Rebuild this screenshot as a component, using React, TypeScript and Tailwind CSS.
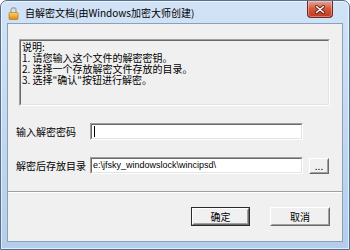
import React from 'react';

const cjk = "font-['Noto_Sans_CJK_SC','Microsoft_YaHei',sans-serif]";

// classic 3D sunken edge (edit boxes)
const Sunken: React.FC<{ className?: string; innerClass?: string; children?: React.ReactNode }> = ({ className = '', innerClass = '', children }) => (
  <div className={`border border-t-[#a0a0a0] border-l-[#a0a0a0] border-b-white border-r-white ${className}`}>
    <div className={`h-full border border-t-[#696969] border-l-[#696969] border-b-[#e3e3e3] border-r-[#e3e3e3] ${innerClass}`}>
      {children}
    </div>
  </div>
);

// classic raised push button
const PushButton: React.FC<{ label: string; isDefault?: boolean; className?: string }> = ({ label, isDefault, className = '' }) => {
  const face = (
    <div className="h-full border border-t-white border-l-white border-b-[#696969] border-r-[#696969]">
      <div className="h-full flex items-center justify-center border border-t-[#f0f0f0] border-l-[#f0f0f0] border-b-[#a0a0a0] border-r-[#a0a0a0] bg-[#f0f0f0] text-[10px] leading-none text-black">
        {label}
      </div>
    </div>
  );
  return isDefault ? (
    <div className={`border border-[#2b2b2b] ${className}`}>{face}</div>
  ) : (
    <div className={className}>{face}</div>
  );
};

const LockIcon = () => (
  <svg width="11" height="14" viewBox="0 0 11 14">
    <defs>
      <linearGradient id="lockBody" x1="0" y1="0" x2="0" y2="1">
        <stop offset="0" stopColor="#fbd667" />
        <stop offset="1" stopColor="#e0870f" />
      </linearGradient>
    </defs>
    <path d="M3 7V4.2a2.5 2.5 0 0 1 5 0V7" fill="none" stroke="#a8a8a8" strokeWidth="1.4" />
    <rect x="1" y="6.5" width="9" height="7" rx="1" fill="url(#lockBody)" stroke="#b36a0a" strokeWidth="0.6" />
  </svg>
);

const CloseButton = () => (
  <div className="w-[26px] h-[17px] rounded-b-[4px] border border-t-0 border-[#6e2a1d] bg-gradient-to-b from-[#e8a595] via-[#d2553c] to-[#c0391f] flex items-center justify-center shadow-[inset_0_0_0_1px_rgba(255,255,255,0.35)]">
    <svg width="10" height="9" viewBox="0 0 10 9">
      <path d="M1.5 1.5L8.5 7.5M8.5 1.5L1.5 7.5" stroke="#5a1a10" strokeWidth="3" strokeLinecap="round" />
      <path d="M1.5 1.5L8.5 7.5M8.5 1.5L1.5 7.5" stroke="#ffffff" strokeWidth="1.6" strokeLinecap="round" />
    </svg>
  </div>
);

export default function App() {
  return (
    <div className={`w-[350px] h-[250px] ${cjk} bg-white`}>
      <div className="w-full h-full flex flex-col rounded-t-[7px] border border-[#55708f] bg-gradient-to-b from-[#d2e3f6] via-[#c3d9f1] to-[#b4cdea] shadow-[inset_0_0_0_1px_rgba(255,255,255,0.6)]">
        {/* title bar */}
        <div className="h-[22px] flex items-start pl-[7px] pr-[16px]">
          <div className="mt-[5px]">
            <LockIcon />
          </div>
          <div className="ml-[6px] mt-[5px] text-[10px] leading-[14px] text-black">自解密文档(由Windows加密大师创建)</div>
          <div className="ml-auto">
            <CloseButton />
          </div>
        </div>

        {/* client area */}
        <div className="flex-1 mx-[6px] mb-[7px] border border-[#8aa1ba] bg-[#f0f0f0] flex flex-col text-black">
          <div className="flex flex-col pl-[11px] pr-[12px]">
            <Sunken className="mt-[15px] h-[67px]" innerClass="bg-[#f0f0f0] pl-[1px] text-[10px] leading-[11px]">
              <div>说明:</div>
              <div>1. 请您输入这个文件的解密密钥。</div>
              <div>2. 选择一个存放解密文件存放的目录。</div>
              <div>3. 选择"确认"按钮进行解密。</div>
            </Sunken>

            <div className="mt-[17px] flex items-center">
              <div className="-ml-[3px] w-[74px] text-[10px] leading-none">输入解密密码</div>
              <Sunken className="w-[213px] h-[17px]" innerClass="bg-white flex items-center pl-[2px]">
                <div className="w-px h-[11px] bg-black" />
              </Sunken>
            </div>

            <div className="mt-[17px] flex items-center">
              <div className="-ml-[3px] w-[74px] text-[10px] leading-none">解密后存放目录</div>
              <Sunken className="w-[213px] h-[17px]" innerClass="bg-white flex items-center pl-[1px]">
                <span className="font-['Liberation_Sans',Arial,sans-serif] text-[9px] leading-none">e:\jfsky_windowslock\wincipsd\</span>
              </Sunken>
              <PushButton label="..." className="ml-[6px] w-[20px] h-[16px]" />
            </div>
          </div>

          <div className="mt-[17px] h-px bg-[#a0a0a0] border-b border-white box-content" />

          <div className="mt-[14px] flex justify-end gap-[20px] pr-[12px]">
            <PushButton label="确定" isDefault className="w-[59px] h-[19px]" />
            <PushButton label="取消" className="w-[60px] h-[19px]" />
          </div>
        </div>
      </div>
    </div>
  );
}
